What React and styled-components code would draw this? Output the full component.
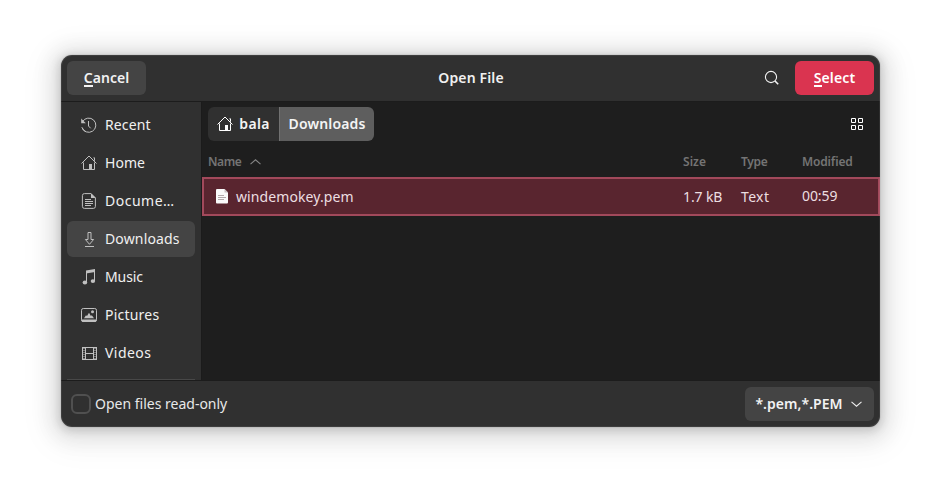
import React from 'react';
import styled, { createGlobalStyle } from 'styled-components';

const GlobalStyle = createGlobalStyle`
  * { box-sizing: border-box; }
  body {
    margin: 0;
    background: #fff;
    color: #f0f0f0;
    font: 400 14px/20px "Noto Sans", "Open Sans", sans-serif;
  }
  button { font: inherit; color: inherit; border: 0; padding: 0; background: none; }
`;

const Desktop = styled.main`
  width: 941px;
  height: 494px;
  padding: 55px 61px 67px;
  overflow: hidden;
`;

const Dialog = styled.section`
  position: relative;
  display: flex;
  flex-direction: column;
  width: 819px;
  height: 372px;
  border-radius: 11px;
  overflow: hidden;
  background: #303030;
  box-shadow:
    0 2px 8px 2px rgba(0, 0, 0, 0.13),
    0 3px 20px 10px rgba(0, 0, 0, 0.09),
    0 6px 32px 16px rgba(0, 0, 0, 0.04),
    0 0 0 1px rgba(0, 0, 0, 0.05);

  &::after {
    content: '';
    position: absolute;
    inset: 0;
    border-radius: inherit;
    box-shadow: inset 0 0 0 1px rgba(255, 255, 255, 0.07);
    pointer-events: none;
  }
`;

const HeaderBar = styled.header`
  display: grid;
  grid-template-columns: 1fr auto 1fr;
  align-items: center;
  height: 47px;
  padding: 0 6px;
  border-bottom: 1px solid #1c1c1c;
`;

const Label = styled.span`
  display: inline-block;
  white-space: pre;
  letter-spacing: ${({ $track = 0 }) => $track}px;
  transform: translateY(${({ $dy = 0 }) => $dy}px);
`;

const Title = styled.h1`
  margin: 0;
  padding-left: 1px;
  font-size: 14px;
  font-weight: 600;
  line-height: 20px;
`;

const HeaderActions = styled.div`
  display: flex;
  align-items: center;
  justify-content: flex-end;
  gap: 15px;
`;

const Button = styled.button`
  display: flex;
  align-items: center;
  justify-content: center;
  gap: 8px;
  width: ${({ $width = 79 }) => $width}px;
  height: 34px;
  padding-right: ${({ $inset = 0 }) => $inset}px;
  border-radius: 6px;
  background: ${({ $primary }) => ($primary ? '#da3450' : '#444444')};
  color: ${({ $primary }) => ($primary ? '#fff' : '#f2f2f2')};
  font-weight: 600;
`;

const Mnemonic = styled.span`
  display: inline-block;
  height: 19px;
  border-bottom: 2px solid currentColor;
`;

const Body = styled.div`
  display: flex;
  height: 278px;
`;

const Sidebar = styled.nav`
  display: flex;
  flex-direction: column;
  gap: 2px;
  width: 140px;
  padding: 5px 6px 0;
`;

const Place = styled.a`
  display: flex;
  align-items: center;
  gap: 8px;
  height: 36px;
  flex: none;
  padding-left: 14px;
  border-radius: 6px;
  background: ${({ $active }) => ($active ? '#444444' : 'transparent')};
  color: #f0f0f0;
`;

const SidebarRule = styled.hr`
  width: 100%;
  height: 1px;
  margin: 6px 0 0;
  border: 0;
  flex: none;
  background: #484848;
`;

const Glyph = styled.svg`
  display: block;
  flex: none;
  fill: none;
  stroke: currentColor;
  color: ${({ $tone = '#c0c0c0' }) => $tone};
`;

const Files = styled.div`
  flex: 1;
  min-width: 0;
  background: #1e1e1e;
  border-left: 1px solid #1b1b1b;
`;

const Toolbar = styled.div`
  display: flex;
  align-items: center;
  justify-content: space-between;
  height: 44px;
  padding: 0 17px 0 6px;
`;

const PathBar = styled.div`
  display: flex;
  height: 34px;
  border-radius: 6px;
  overflow: hidden;
`;

const Crumb = styled.button`
  display: flex;
  align-items: center;
  justify-content: center;
  gap: 6px;
  width: ${({ $width }) => $width}px;
  background: ${({ $current }) => ($current ? '#5e5e5e' : '#303030')};
  border-left: ${({ $current }) => ($current ? '1px solid #717171' : '0')};
  color: #f4f4f4;
  font-weight: 600;
`;

const columns = '475px 58px 61px 1fr';

const ColumnHeads = styled.div`
  display: grid;
  grid-template-columns: ${columns};
  align-items: center;
  height: 31px;
  padding-left: 6px;
  color: #747474;
  font-size: 12px;
  font-weight: 600;
`;

const Head = styled.div`
  display: flex;
  align-items: center;
  gap: 9px;
`;

const FileRow = styled.div`
  display: grid;
  grid-template-columns: ${columns};
  align-items: center;
  height: 39px;
  padding-left: 4px;
  border: 2px solid #a2495b;
  background: #59252f;
  color: #ecdfe1;
`;

const FileName = styled.div`
  display: flex;
  align-items: center;
  gap: 8px;
  padding-left: 8px;
`;

const Footer = styled.footer`
  display: flex;
  align-items: center;
  justify-content: space-between;
  height: 47px;
  padding: 0 6px 0 10px;
  border-top: 1px solid #1c1c1c;
`;

const ReadOnly = styled.label`
  display: flex;
  align-items: center;
  gap: 4px;
  color: #e8e8e8;
`;

const CheckBox = styled.span`
  width: 20px;
  height: 20px;
  border: 2px solid #505050;
  border-radius: 6px;
`;

const RecentIcon = () => (
  <Glyph width="16" height="16">
    <path d="M1.6 4.6A7.1 7.1 0 1 1 1 10.500" />
    <path d="M1 10.500A7.100 7.100 0 0 0 5 14.900" />
    <path d="M.2 1.600V6.200h4.600z" fill="currentColor" stroke="none" />
    <path d="M7.500 4v5l2.200 2.300" />
  </Glyph>
);

const HomeIcon = ({ tone }) => (
  <Glyph width="16" height="16" $tone={tone}>
    <path d="M.5 8.5 8 1l7.5 7.5M2.5 7.500v7h11v-7" />
    <path d="M8 9h3v5.500H8zM12 2.500h2v4l-1-1.200V3.600z" fill="currentColor" stroke="none" />
  </Glyph>
);

const DocumentIcon = () => (
  <Glyph width="16" height="16">
    <path d="M3.500.600H10l4.400 4.400v8.400a2 2 0 0 1-2 2h-9a2 2 0 0 1-2-2V2.600a2 2 0 0 1 2-2z" />
    <path d="M10 .300V5h4.800z" fill="currentColor" stroke="none" />
    <path d="M4 6.500h6M4 8.500h8M4 10.500h8M4 12.500h6" />
  </Glyph>
);

const DownloadIcon = () => (
  <Glyph width="16" height="16">
    <path d="M7 1.500h3v7h2.600l-4.100 4.800-4.100-4.800H7zM4 15.500h9" />
  </Glyph>
);

const MusicIcon = () => (
  <Glyph width="16" height="16">
    <path d="M5.500 13.500v-11M13.500 12V1" />
    <path d="M5 1.600 14 0v3.100L5 4.500z" fill="currentColor" stroke="none" />
    <ellipse cx="3.900" cy="13.500" rx="2.300" ry="1.900" fill="currentColor" stroke="none" />
    <ellipse cx="11.900" cy="12.100" rx="2.200" ry="1.900" fill="currentColor" stroke="none" />
  </Glyph>
);

const PicturesIcon = () => (
  <Glyph width="16" height="16">
    <rect x=".5" y="1.5" width="15" height="13" rx="1.8" />
    <path d="M.5 12.500h15V14l-1 1h-13l-1-1zM3 11.200l2-3 1 .9 2-3.300 1.900 3.200.9-.7 2.200 2.900z" fill="currentColor" stroke="none" />
    <circle cx="11.5" cy="4.7" r="1.5" fill="currentColor" stroke="none" />
  </Glyph>
);

const VideosIcon = () => (
  <Glyph width="16" height="16">
    <path d="M1 2.500h15M1 14.500h15M4.500 2.500v12M12.500 2.500v12M4.500 8.500h8" />
    <path d="M1.500 2v13M15.500 2v13" />
    <path d="M3 3v12M14 3v12" strokeDasharray="1 1" />
  </Glyph>
);

const SearchIcon = () => (
  <Glyph width="16" height="16" $tone="#f2f2f2">
    <circle cx="7" cy="7" r="5.6" strokeWidth="1.1" />
    <path d="m11 11 3.2 3.2" strokeWidth="1.6" />
  </Glyph>
);

const GridIcon = () => (
  <Glyph width="12" height="12" $tone="#fff">
    <path d="M.5.5h4v4h-4zM7.5.5h4v4h-4zM.5 7.5h4v4h-4zM7.5 7.5h4v4h-4z" />
  </Glyph>
);

const Chevron = ({ up, tone }) => (
  <Glyph width="11" height="6" $tone={tone}>
    <path d={up ? 'M.5 5.2 5.5.8l5 4.4' : 'M.5.8l5 4.4 5-4.4'} strokeWidth="1.1" />
  </Glyph>
);

const FileIcon = () => (
  <Glyph width="12" height="15" $tone="#fafafa">
    <path d="M1.3 0H8.5L12 3.5v9.7c0 .8-.5 1.3-1.3 1.3H1.3C.5 14.5 0 14 0 13.2V1.3C0 .5.5 0 1.3 0z" fill="currentColor" stroke="none" />
    <path d="M8.5 0v3.500H12z" fill="#c9bfc1" stroke="none" />
    <path d="M2 6.500h6M2 8.500h8M2 10.500h6" stroke="#b3a9ab" />
  </Glyph>
);

const places = [
  { name: 'Recent', icon: RecentIcon, track: 0.12 },
  { name: 'Home', icon: HomeIcon, track: 0.05 },
  { name: 'Docume…', icon: DocumentIcon, track: 0.5 },
  { name: 'Downloads', icon: DownloadIcon, track: 0.14, active: true },
  { name: 'Music', icon: MusicIcon, track: -0.08 },
  { name: 'Pictures', icon: PicturesIcon, track: 0.22 },
  { name: 'Videos', icon: VideosIcon, track: 0.45 },
];

export default function App() {
  return (
    <>
      <GlobalStyle />
      <Desktop>
        <Dialog>
          <HeaderBar>
            <Button>
              <Label $track={0.05}><Mnemonic>C</Mnemonic>ancel</Label>
            </Button>
            <Title><Label $track={0.14}>Open File</Label></Title>
            <HeaderActions>
              <SearchIcon />
              <Button $primary>
                <Label $track={0.15}><Mnemonic>S</Mnemonic>elect</Label>
              </Button>
            </HeaderActions>
          </HeaderBar>
          <Body>
            <Sidebar>
              {places.map(({ name, icon: Icon, track, active }) => (
                <Place key={name} $active={active}>
                  <Icon />
                  <Label $track={track}>{name}</Label>
                </Place>
              ))}
              <SidebarRule />
            </Sidebar>
            <Files>
              <Toolbar>
                <PathBar>
                  <Crumb $width={71}>
                    <HomeIcon tone="#fff" />
                    <Label $track={0.3}>bala</Label>
                  </Crumb>
                  <Crumb $width={95} $current>
                    <Label $track={0.14}>Downloads</Label>
                  </Crumb>
                </PathBar>
                <GridIcon />
              </Toolbar>
              <ColumnHeads>
                <Head><Label $track={-0.4}>Name</Label><Chevron up tone="#858585" /></Head>
                <Head><Label $track={0.05}>Size</Label></Head>
                <Head><Label $track={-0.35}>Type</Label></Head>
                <Head><Label $track={-0.15}>Modified</Label></Head>
              </ColumnHeads>
              <FileRow>
                <FileName><FileIcon /><Label $track={0.1}>windemokey.pem</Label></FileName>
                <Label $track={-0.12}>1.7 kB</Label>
                <Label $track={0.35}>Text</Label>
                <Label $track={-0.1} $dy={-1}>00:59</Label>
              </FileRow>
            </Files>
          </Body>
          <Footer>
            <ReadOnly>
              <CheckBox />
              <Label>Open files read-only</Label>
            </ReadOnly>
            <Button $width={129} $inset={2}>
              <Label $track={0.04}>*.pem,*.PEM</Label>
              <Chevron tone="#ededed" />
            </Button>
          </Footer>
        </Dialog>
      </Desktop>
    </>
  );
}
